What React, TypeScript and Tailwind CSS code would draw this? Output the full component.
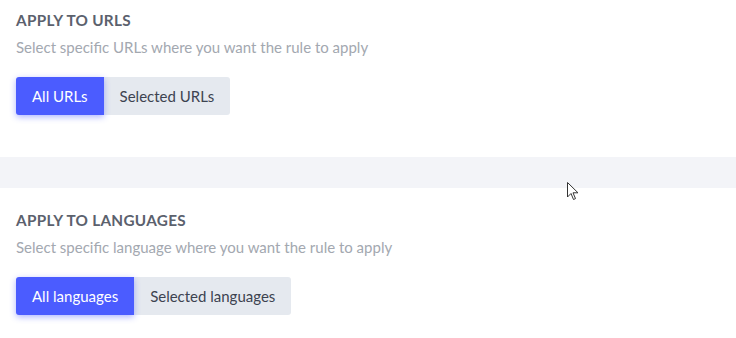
import React, { useState } from 'react';

type Section = {
  title: string;
  hint: string;
  options: [string, string];
};

const sections: Section[] = [
  {
    title: 'APPLY TO URLS',
    hint: 'Select specific URLs where you want the rule to apply',
    options: ['All URLs', 'Selected URLs'],
  },
  {
    title: 'APPLY TO LANGUAGES',
    hint: 'Select specific language where you want the rule to apply',
    options: ['All languages', 'Selected languages'],
  },
];

const Toggle: React.FC<{ options: [string, string] }> = ({ options }) => {
  const [active, setActive] = useState(0);
  return (
    <div className="flex">
      {options.map((label, i) => (
        <button
          key={label}
          onClick={() => setActive(i)}
          className={
            i === active
              ? 'h-[38px] px-4 text-[15px] text-white bg-[#4b5cff] shadow-[0_2px_6px_rgba(75,92,255,0.45)] z-10 ' +
                (i === 0 ? 'rounded-l-[3px]' : 'rounded-r-[3px]')
              : 'h-[38px] px-4 text-[15px] text-[#3d4350] bg-[#e5e9ef] ' +
                (i === 0 ? 'rounded-l-[3px]' : 'rounded-r-[3px]')
          }
        >
          {label}
        </button>
      ))}
    </div>
  );
};

const RuleSection: React.FC<{ section: Section; className?: string }> = ({ section, className }) => (
  <div className={'px-4 ' + (className ?? '')}>
    <h3 className="text-[15.3px] leading-5 font-bold text-[#5b616d] tracking-[0.3px]">{section.title}</h3>
    <p className="mt-[7px] text-[15px] leading-5 text-[#a3a8b0]">{section.hint}</p>
    <div className="mt-[20px]">
      <Toggle options={section.options} />
    </div>
  </div>
);

export default function App() {
  return (
    <div
      className="relative w-[736px] h-[338px] bg-white overflow-hidden"
      style={{ fontFamily: 'Lato, "Noto Sans", sans-serif' }}
    >
      <RuleSection section={sections[0]} className="pt-[10px] pb-[42px]" />
      <div className="h-[31px] bg-[#f3f4f8]" />
      <RuleSection section={sections[1]} className="pt-[22px]" />
      {/* mouse pointer captured in the screenshot */}
      <svg className="absolute left-[567px] top-[182px]" width="12" height="19" viewBox="0 0 12 19">
        <path d="M0.5 0.5 L0.5 15 L4 11.5 L6.5 17.5 L8.5 16.6 L6 10.8 L11 10.8 Z" fill="#fff" stroke="#333" strokeWidth="1" strokeLinejoin="round" />
      </svg>
    </div>
  );
}
